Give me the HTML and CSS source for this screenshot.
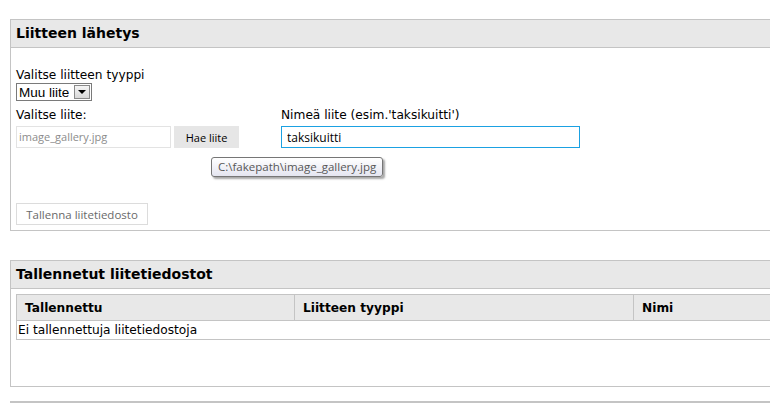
FILE: index.html
```html
<!DOCTYPE html>
<html lang="fi">
<head>
  <meta charset="UTF-8" />
  <title>Liitteet</title>
  <link rel="stylesheet" href="styles.css">
</head>
<body>
  <div class="panel upload">
    <div class="panel-head">Liitteen lähetys</div>
    <div class="panel-body">
      <div class="field type-field">
        <label for="type">Valitse liitteen tyyppi</label>
        <div class="select">
          <span class="select-value">Muu liite</span>
          <span class="select-arrow"></span>
        </div>
      </div>

      <div class="file-row">
        <div class="field">
          <label>Valitse liite:</label>
          <div class="file-pick">
            <div class="file-name">image_gallery.jpg</div>
            <button class="btn-gray">Hae liite</button>
          </div>
          <div class="tooltip">C:\fakepath\image_gallery.jpg</div>
        </div>
        <div class="field name-field">
          <label for="name">Nimeä liite (esim.'taksikuitti')</label>
          <input type="text" id="name" value="taksikuitti" />
        </div>
      </div>

      <button class="btn-save">Tallenna liitetiedosto</button>
    </div>
  </div>

  <div class="panel saved">
    <div class="panel-head">Tallennetut liitetiedostot</div>
    <div class="panel-body">
      <table>
        <thead>
          <tr>
            <th class="col-date">Tallennettu</th>
            <th class="col-type">Liitteen tyyppi</th>
            <th>Nimi</th>
          </tr>
        </thead>
        <tbody>
          <tr>
            <td colspan="3">Ei tallennettuja liitetiedostoja</td>
          </tr>
        </tbody>
      </table>
    </div>
  </div>

  <div class="bottom-line"></div>
</body>
</html>
```

FILE: styles.css
```css
:root {
  --line: #c4c4c4;
  --head-bg: #e8e8e8;
}

html, body {
  margin: 0;
  overflow: hidden;
}

body {
  font-family: "DejaVu Sans", Verdana, sans-serif;
  font-size: 12.2px;
  color: #000;
  background: #fff;
  padding: 19px 0 0 10px;
  width: 820px;
}

.panel {
  border: 1px solid var(--line);
  border-right: none;
  width: 800px;
}

.panel-head {
  background: var(--head-bg);
  border-bottom: 1px solid var(--line);
  height: 27px;
  line-height: 27px;
  padding-left: 5px;
  font-weight: bold;
  font-size: 14px;
}

.panel-body {
  padding: 0 5px;
}

.upload .panel-body {
  height: 182px;
}

.saved {
  margin-top: 29px;
}

.saved .panel-body {
  height: 92px;
  padding-top: 5px;
}

label {
  display: block;
  line-height: 15px;
}

.type-field {
  padding-top: 20px;
}

.select {
  display: inline-flex;
  align-items: center;
  justify-content: space-between;
  border: 1px solid #7a7a7a;
  height: 16px;
  width: 72px;
  padding-left: 2px;
  font-family: "Liberation Sans", Arial, sans-serif;
  font-size: 13.5px;
}

.select-arrow {
  width: 16px;
  height: 14px;
  margin-right: 1px;
  border: 1px solid #8a8a8a;
  background: linear-gradient(#f6f6f6, #d8d8d8);
  box-sizing: border-box;
  position: relative;
}

.select-arrow::after {
  content: "";
  position: absolute;
  left: 3px;
  top: 4px;
  border-left: 4px solid transparent;
  border-right: 4px solid transparent;
  border-top: 4px solid #000;
}

.file-row {
  display: flex;
  margin-top: 7px;
}

.field {
  position: relative;
}

.file-pick {
  display: flex;
  gap: 3px;
  margin-top: 3px;
}

.file-name {
  width: 151px;
  height: 20px;
  border: 1px solid #e3e3e3;
  padding-left: 2px;
  font-family: "Open Sans", sans-serif;
  font-size: 11px;
  line-height: 20px;
  color: #8c8c8c;
}

.btn-gray {
  width: 65px;
  height: 22px;
  border: none;
  background: #e6e6e6;
  padding: 0;
  font-family: "Open Sans", sans-serif;
  font-size: 11px;
  color: #000;
}

.name-field {
  margin-left: 42px;
}

.name-field input {
  display: block;
  margin: 3px 0 0;
  width: 299px;
  height: 22px;
  box-sizing: border-box;
  border: 1px solid #1ba1e2;
  padding: 0 5px;
  font-family: "Open Sans", sans-serif;
  font-size: 12px;
  outline: none;
}

.tooltip {
  position: absolute;
  left: 195px;
  top: 49px;
  white-space: nowrap;
  padding: 1px 6px 2px;
  border: 1px solid #767676;
  border-radius: 3px;
  background: linear-gradient(#ffffff, #e4e5f0);
  box-shadow: 2px 2px 2px rgba(0, 0, 0, 0.35);
  font-family: "Open Sans", sans-serif;
  font-size: 11.5px;
  color: #575757;
}

.btn-save {
  display: block;
  margin-top: 55px;
  width: 132px;
  height: 22px;
  border: 1px solid #dcdcdc;
  background: #fff;
  padding: 0;
  font-family: "Open Sans", sans-serif;
  font-size: 11.5px;
  color: #6a6a6a;
}

table {
  border-collapse: collapse;
  width: 790px;
  table-layout: fixed;
}

th {
  background: var(--head-bg);
  border: 1px solid var(--line);
  height: 25px;
  text-align: left;
  padding: 0 0 0 8px;
  font-size: 12.2px;
}

.col-date {
  width: 269px;
}

.col-type {
  width: 330px;
}

td {
  border: 1px solid var(--line);
  border-right: none;
  height: 18px;
  padding: 0 1px;
}

.bottom-line {
  margin-top: 14px;
  height: 2px;
  background: var(--line);
  width: 800px;
}
```
